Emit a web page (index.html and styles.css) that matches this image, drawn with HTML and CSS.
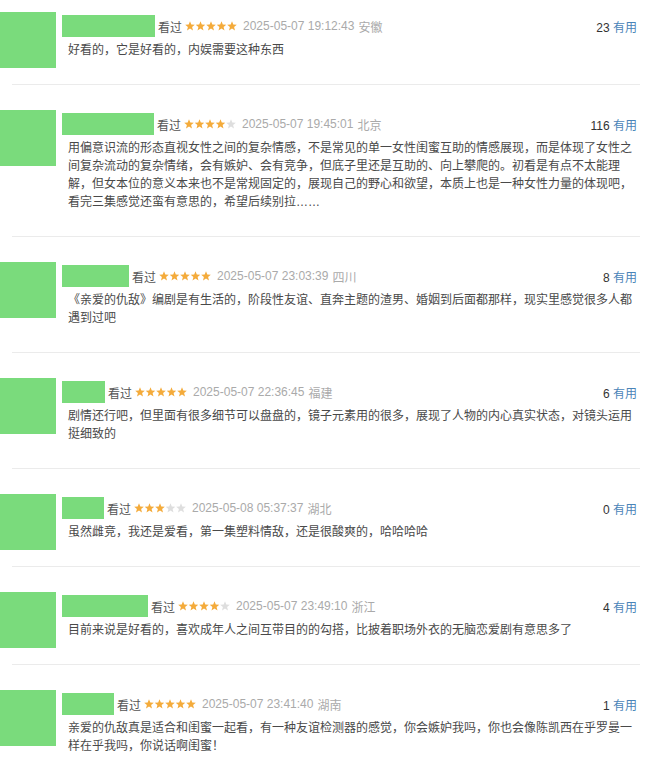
FILE: index.html
```html
<!DOCTYPE html>
<html lang="zh-CN">
<head>
  <meta charset="UTF-8">
  <meta name="viewport" content="width=device-width, initial-scale=1.0">
  <title>短评</title>
  <link rel="stylesheet" href="styles.css">
</head>
<body>
  <svg class="defs" width="0" height="0">
    <symbol id="star" viewBox="0 0 10 10">
      <polygon points="5,0.3 6.3,3.6 9.8,3.8 7.1,6 8,9.4 5,7.5 2,9.4 2.9,6 0.2,3.8 3.7,3.6"/>
    </symbol>
  </svg>

  <div class="comments">

    <div class="comment">
      <div class="avatar"></div>
      <div class="comment-body">
        <div class="comment-info">
          <span class="name" style="width:93px"></span>
          <span class="status">看过</span>
          <svg class="stars" width="52" height="10">
            <use href="#star" x="0" width="10" height="10" class="on"/>
            <use href="#star" x="10.5" width="10" height="10" class="on"/>
            <use href="#star" x="21" width="10" height="10" class="on"/>
            <use href="#star" x="31.5" width="10" height="10" class="on"/>
            <use href="#star" x="42" width="10" height="10" class="on"/>
          </svg>
          <span class="time">2025-05-07 19:12:43</span>
          <span class="ip">安徽</span>
          <span class="votes"><span class="count">23</span> <a class="useful">有用</a></span>
        </div>
        <p class="short">好看的，它是好看的，内娱需要这种东西</p>
      </div>
    </div>

    <div class="comment">
      <div class="avatar"></div>
      <div class="comment-body">
        <div class="comment-info">
          <span class="name" style="width:92px"></span>
          <span class="status">看过</span>
          <svg class="stars" width="52" height="10">
            <use href="#star" x="0" width="10" height="10" class="on"/>
            <use href="#star" x="10.5" width="10" height="10" class="on"/>
            <use href="#star" x="21" width="10" height="10" class="on"/>
            <use href="#star" x="31.5" width="10" height="10" class="on"/>
            <use href="#star" x="42" width="10" height="10" class="off"/>
          </svg>
          <span class="time">2025-05-07 19:45:01</span>
          <span class="ip">北京</span>
          <span class="votes"><span class="count">116</span> <a class="useful">有用</a></span>
        </div>
        <p class="short">用偏意识流的形态直视女性之间的复杂情感，不是常见的单一女性闺蜜互助的情感展现，而是体现了女性之间复杂流动的复杂情绪，会有嫉妒、会有竞争，但底子里还是互助的、向上攀爬的。初看是有点不太能理解，但女本位的意义本来也不是常规固定的，展现自己的野心和欲望，本质上也是一种女性力量的体现吧，看完三集感觉还蛮有意思的，希望后续别拉……</p>
      </div>
    </div>

    <div class="comment">
      <div class="avatar"></div>
      <div class="comment-body">
        <div class="comment-info">
          <span class="name" style="width:67px"></span>
          <span class="status">看过</span>
          <svg class="stars" width="52" height="10">
            <use href="#star" x="0" width="10" height="10" class="on"/>
            <use href="#star" x="10.5" width="10" height="10" class="on"/>
            <use href="#star" x="21" width="10" height="10" class="on"/>
            <use href="#star" x="31.5" width="10" height="10" class="on"/>
            <use href="#star" x="42" width="10" height="10" class="on"/>
          </svg>
          <span class="time">2025-05-07 23:03:39</span>
          <span class="ip">四川</span>
          <span class="votes"><span class="count">8</span> <a class="useful">有用</a></span>
        </div>
        <p class="short">《亲爱的仇敌》编剧是有生活的，阶段性友谊、直奔主题的渣男、婚姻到后面都那样，现实里感觉很多人都遇到过吧</p>
      </div>
    </div>

    <div class="comment">
      <div class="avatar"></div>
      <div class="comment-body">
        <div class="comment-info">
          <span class="name" style="width:43px"></span>
          <span class="status">看过</span>
          <svg class="stars" width="52" height="10">
            <use href="#star" x="0" width="10" height="10" class="on"/>
            <use href="#star" x="10.5" width="10" height="10" class="on"/>
            <use href="#star" x="21" width="10" height="10" class="on"/>
            <use href="#star" x="31.5" width="10" height="10" class="on"/>
            <use href="#star" x="42" width="10" height="10" class="on"/>
          </svg>
          <span class="time">2025-05-07 22:36:45</span>
          <span class="ip">福建</span>
          <span class="votes"><span class="count">6</span> <a class="useful">有用</a></span>
        </div>
        <p class="short">剧情还行吧，但里面有很多细节可以盘盘的，镜子元素用的很多，展现了人物的内心真实状态，对镜头运用挺细致的</p>
      </div>
    </div>

    <div class="comment">
      <div class="avatar"></div>
      <div class="comment-body">
        <div class="comment-info">
          <span class="name" style="width:42px"></span>
          <span class="status">看过</span>
          <svg class="stars" width="52" height="10">
            <use href="#star" x="0" width="10" height="10" class="on"/>
            <use href="#star" x="10.5" width="10" height="10" class="on"/>
            <use href="#star" x="21" width="10" height="10" class="on"/>
            <use href="#star" x="31.5" width="10" height="10" class="off"/>
            <use href="#star" x="42" width="10" height="10" class="off"/>
          </svg>
          <span class="time">2025-05-08 05:37:37</span>
          <span class="ip">湖北</span>
          <span class="votes"><span class="count">0</span> <a class="useful">有用</a></span>
        </div>
        <p class="short">虽然雌竞，我还是爱看，第一集塑料情敌，还是很酸爽的，哈哈哈哈</p>
      </div>
    </div>

    <div class="comment">
      <div class="avatar"></div>
      <div class="comment-body">
        <div class="comment-info">
          <span class="name" style="width:86px"></span>
          <span class="status">看过</span>
          <svg class="stars" width="52" height="10">
            <use href="#star" x="0" width="10" height="10" class="on"/>
            <use href="#star" x="10.5" width="10" height="10" class="on"/>
            <use href="#star" x="21" width="10" height="10" class="on"/>
            <use href="#star" x="31.5" width="10" height="10" class="on"/>
            <use href="#star" x="42" width="10" height="10" class="off"/>
          </svg>
          <span class="time">2025-05-07 23:49:10</span>
          <span class="ip">浙江</span>
          <span class="votes"><span class="count">4</span> <a class="useful">有用</a></span>
        </div>
        <p class="short">目前来说是好看的，喜欢成年人之间互带目的的勾搭，比披着职场外衣的无脑恋爱剧有意思多了</p>
      </div>
    </div>

    <div class="comment">
      <div class="avatar"></div>
      <div class="comment-body">
        <div class="comment-info">
          <span class="name" style="width:52px"></span>
          <span class="status">看过</span>
          <svg class="stars" width="52" height="10">
            <use href="#star" x="0" width="10" height="10" class="on"/>
            <use href="#star" x="10.5" width="10" height="10" class="on"/>
            <use href="#star" x="21" width="10" height="10" class="on"/>
            <use href="#star" x="31.5" width="10" height="10" class="on"/>
            <use href="#star" x="42" width="10" height="10" class="on"/>
          </svg>
          <span class="time">2025-05-07 23:41:40</span>
          <span class="ip">湖南</span>
          <span class="votes"><span class="count">1</span> <a class="useful">有用</a></span>
        </div>
        <p class="short">亲爱的仇敌真是适合和闺蜜一起看，有一种友谊检测器的感觉，你会嫉妒我吗，你也会像陈凯西在乎罗曼一样在乎我吗，你说话啊闺蜜！</p>
      </div>
    </div>

  </div>
</body>
</html>
```

FILE: styles.css
```css
body {
  margin: 0;
  background-color: #fff;
  font-family: 'Liberation Sans', 'Noto Sans CJK SC', sans-serif;
  font-size: 12px;
  color: #494949;
}

.defs {
  position: absolute;
  width: 0;
  height: 0;
}

.comments {
  padding-top: 12px;
}

.comment {
  display: flex;
  align-items: flex-start;
  margin: 0 10px 25px 12px;
  border-bottom: 1px solid #ebebeb;
}

.avatar {
  flex: none;
  width: 56px;
  height: 56px;
  margin-left: -12px;
  margin-right: 12px;
  background-color: #7adb7c;
}

.comment-body {
  flex: 1;
  min-width: 0;
  padding: 4px 0 25px;
}

.comment-info {
  display: flex;
  align-items: center;
  height: 20px;
  padding-right: 3px;
  white-space: nowrap;
}

.name {
  display: inline-block;
  height: 22px;
  margin-left: -6px;
  margin-right: 3px;
  background-color: #7adb7c;
}

.status {
  color: #555;
  margin-right: 3px;
}

.stars {
  display: block;
  margin-right: 6px;
}
.stars .on { fill: #f4ab3b; }
.stars .off { fill: #dedede; }

.time,
.ip {
  color: #aaa;
}

.time {
  margin-right: 4px;
}

.votes {
  margin-left: auto;
  color: #333;
}

.useful {
  color: #4a84b8;
  text-decoration: none;
  cursor: pointer;
}

.short {
  margin: 5px 0 0;
  line-height: 18px;
  word-break: break-all;
}

.comment:last-child {
  border-bottom: none;
}
```
